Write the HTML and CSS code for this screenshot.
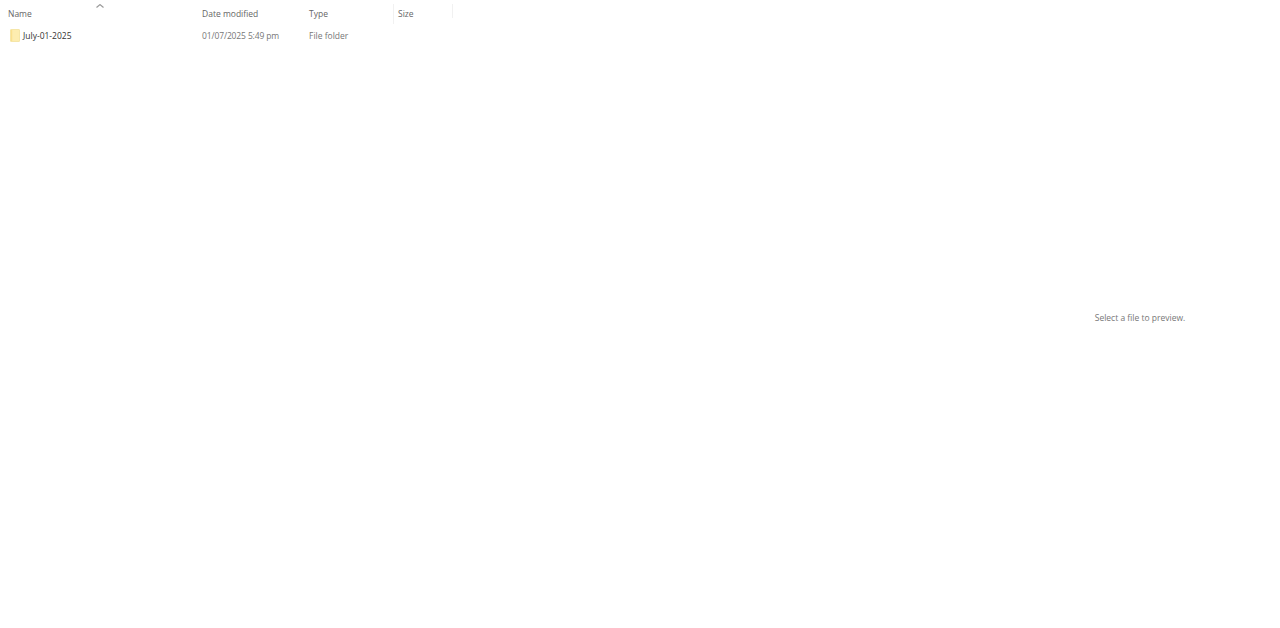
FILE: index.html
```html
<!DOCTYPE html>
<html lang="en">
<head>
<meta charset="utf-8">
<title>File Explorer</title>
<link rel="stylesheet" href="styles.css">
</head>
<body>
<div class="explorer">
  <main class="list">
    <div class="row header">
      <div class="cell col-name">Name<svg class="sort" width="8" height="4" viewBox="0 0 8 4"><path d="M.5 3.5 4 .6l3.5 2.9" fill="none" stroke="#999" stroke-width="1.2"/></svg></div>
      <div class="cell col-date">Date modified</div>
      <div class="cell col-type">Type</div>
      <div class="cell col-size">Size</div>
    </div>
    <div class="row item">
      <div class="cell col-name name-item">
        <svg class="folder" width="10" height="13" viewBox="0 0 10 13"><rect x=".5" y=".5" width="9" height="12" rx=".5" fill="#fdedb0" stroke="#f5e6a8"/><path d="M1 1h1.2v11H1z" fill="#fae08e"/></svg>
        <span>July-01-2025</span>
      </div>
      <div class="cell col-date muted date-value">01/07/2025 5:49 pm</div>
      <div class="cell col-type muted">File folder</div>
      <div class="cell col-size"></div>
    </div>
  </main>
  <aside class="preview">Select a file to preview.</aside>
</div>
</body>
</html>
```
FILE: styles.css
```css
html, body {
  margin: 0;
  height: 100%;
  background: #fff;
}
body {
  font-family: "Open Sans", "Noto Sans", sans-serif;
  font-size: 8.5px;
  color: #666;
  overflow: hidden;
}
.explorer {
  display: flex;
  height: 628px;
}
.list {
  flex: 1;
}
.row {
  display: grid;
  grid-template-columns: 194px 107px 89px 55px;
  padding-left: 8px;
}
.header {
  height: 28px;
  align-items: start;
}
.header .cell {
  position: relative;
  height: 28px;
  line-height: 28px;
}
.header .col-size::before,
.header .col-size::after {
  content: "";
  position: absolute;
  top: 4px;
  height: 20px;
  width: 1px;
  background: #f1f1f1;
}
.header .col-size::before { left: -5px; }
.header .col-size::after { right: 0; height: 14px; }
.sort {
  position: absolute;
  left: 88px;
  top: 4px;
}
.item {
  height: 15px;
  line-height: 15px;
}
.name-item {
  display: flex;
  align-items: center;
  gap: 3px;
  padding-left: 2px;
  color: #333;
}
.muted {
  color: #777;
}
.date-value {
  letter-spacing: -0.13px;
}
.preview {
  width: 280px;
  padding-top: 7px;
  box-sizing: border-box;
  display: flex;
  align-items: center;
  justify-content: center;
  color: #777;
}
```
